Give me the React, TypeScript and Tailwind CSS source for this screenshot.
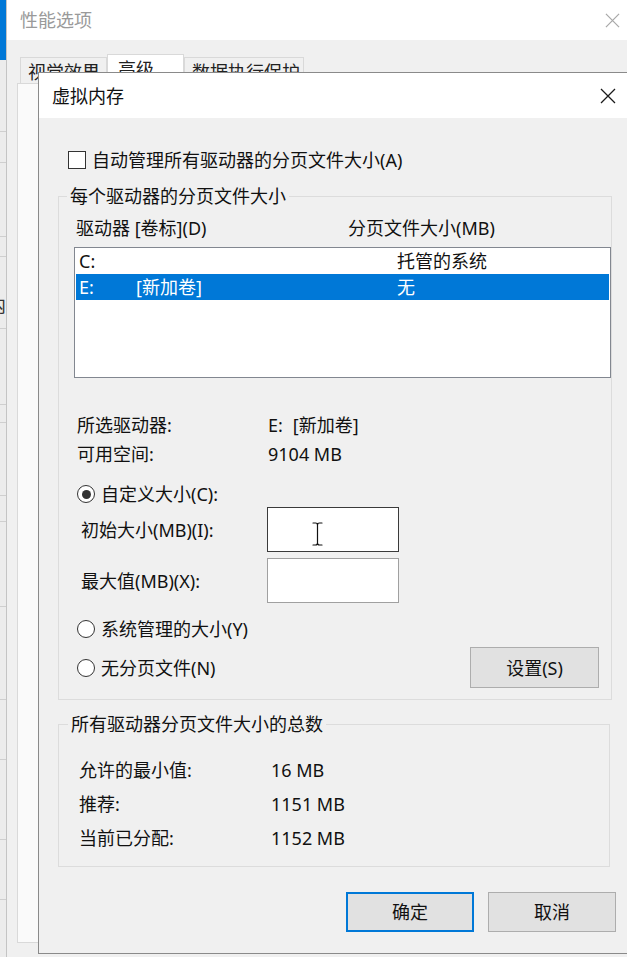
import React from 'react';

const font = "font-['Noto_Sans','Noto_Sans_CJK_SC',sans-serif]";

// y positions of the row lines in the window peeking in on the far left
const stripLines = [132, 163, 237, 257, 329, 405, 423, 496, 522, 607, 700, 760, 840, 900];

function CloseIcon({ className }: { className?: string }) {
  return (
    <svg viewBox="0 0 16 16" className={className} fill="none" stroke="currentColor" strokeWidth={1.3}>
      <path d="M1 1 L15 15 M15 1 L1 15" />
    </svg>
  );
}

function Radio({ checked }: { checked?: boolean }) {
  return (
    <span className="flex h-[18px] w-[18px] shrink-0 items-center justify-center rounded-full border-[1.5px] border-[#333] bg-white">
      {checked && <span className="h-[9px] w-[9px] rounded-full bg-[#333]" />}
    </span>
  );
}

function IBeam() {
  return (
    <svg viewBox="0 0 11 24" className="h-[24px] w-[11px]" fill="none" strokeLinecap="round">
      <path d="M1 1 H3.5 Q5.5 1 5.5 3 V21 Q5.5 23 3.5 23 H1 M10 1 H7.5 Q5.5 1 5.5 3 M5.5 21 Q5.5 23 7.5 23 H10" stroke="#fff" strokeWidth={2.6} />
      <path d="M1 1 H3.5 Q5.5 1 5.5 3 V21 Q5.5 23 3.5 23 H1 M10 1 H7.5 Q5.5 1 5.5 3 M5.5 21 Q5.5 23 7.5 23 H10" stroke="#111" strokeWidth={1.2} />
    </svg>
  );
}

export default function App() {
  let prev = 60;

  return (
    <div className={`relative h-[957px] w-[627px] overflow-hidden bg-[#f0f0f0] text-[18px] text-[#111] ${font}`}>
      {/* window behind, only a sliver visible */}
      <div className="absolute left-0 top-0 h-full w-[7px] overflow-hidden border-r border-[#c4c4c4] bg-[#ececec]">
        <div className="h-[60px] bg-[#0078d7]" />
        {stripLines.map((y, i) => {
          const h = y - prev;
          prev = y;
          return (
            <div key={y} className="flex justify-end overflow-hidden border-b border-[#cfcfcf] leading-[24px]" style={{ height: h }}>
              {i === 4 && <span className="mt-[36px] shrink-0 text-[#333]">内</span>}
            </div>
          );
        })}
      </div>

      {/* 性能选项 */}
      <div className="absolute left-[7px] top-0 h-full w-[640px] bg-[#f0f0f0]">
        <div className="flex h-[40px] items-center justify-between bg-white pl-[13px] pr-[27px] leading-[24px] text-[#9a9a9a]">
          <span>性能选项</span>
          <CloseIcon className="h-[15px] w-[15px] text-[#a8a8a8]" />
        </div>
        <div className="flex h-[43px] items-end pl-[13px] leading-[24px] text-[#222]">
          <div className="h-[26px] w-[87px] border border-b-0 border-[#d9d9d9] bg-[#f0f0f0] pl-[7px] pt-[2px]">视觉效果</div>
          <div className="h-[29px] w-[77px] border border-b-0 border-[#d9d9d9] bg-white pl-[10px] pt-[2px]">高级</div>
          <div className="h-[26px] w-[120px] border border-b-0 border-[#d9d9d9] bg-[#f0f0f0] pl-[7px] pt-[2px]">数据执行保护</div>
        </div>
        <div className="ml-[10px] h-[860px] w-[600px] border border-[#d9d9d9] bg-[#fafafa]" />
      </div>

      {/* 虚拟内存 */}
      <div className="absolute left-[38px] top-[72px] h-[882px] w-[600px] border border-[#8a8a8a] bg-[#f0f0f0] leading-[24px]">
        <div className="flex h-[45px] items-center justify-between bg-white pl-[13px] pr-[21px]">
          <span>虚拟内存</span>
          <CloseIcon className="h-[16px] w-[16px] text-[#1a1a1a]" />
        </div>

        <div className="pl-[19px] pt-[33px]">
          <div className="ml-[10px] flex h-[18px] items-center gap-[6px]">
            <span className="h-[18px] w-[18px] shrink-0 border-[1.5px] border-[#333] bg-white" />
            <span>自动管理所有驱动器的分页文件大小(A)</span>
          </div>

          <fieldset className="mt-[15px] w-[552px] border border-[#dcdcdc] pb-[11px]">
            <legend className="ml-[8px] px-[3px] leading-[24px]">每个驱动器的分页文件大小</legend>

            <div className="mt-[8px] flex pl-[17px]">
              <span className="w-[272px]">驱动器 [卷标](D)</span>
              <span>分页文件大小(MB)</span>
            </div>

            <div className="ml-[15px] mt-[7px] h-[131px] w-[537px] border border-[#828790] bg-white px-px">
              <div className="flex h-[26px] items-center pl-[3px]">
                <span className="w-[57px]">C:</span>
                <span className="w-[261px]" />
                <span>托管的系统</span>
              </div>
              <div className="flex h-[26px] items-center bg-[#0078d7] pl-[3px] text-white">
                <span className="w-[57px]">E:</span>
                <span className="w-[261px]">[新加卷]</span>
                <span>无</span>
              </div>
            </div>

            <div className="mt-[32px] pl-[18px]">
              <div className="flex h-[29px] items-center">
                <span className="w-[191px]">所选驱动器:</span>
                <span>E:</span>
                <span className="ml-[10px]">[新加卷]</span>
              </div>
              <div className="flex h-[29px] items-center">
                <span className="w-[191px]">可用空间:</span>
                <span>9104 MB</span>
              </div>
            </div>

            <div className="ml-[18px] mt-[14px] flex h-[24px] items-center gap-[6px]">
              <Radio checked />
              <span>自定义大小(C):</span>
            </div>

            <div className="mt-[1px] flex h-[45px] items-center pl-[22px]">
              <span className="w-[186px]">初始大小(MB)(I):</span>
              <div className="relative h-[45px] w-[132px] border border-[#3a3a3a] bg-white">
                <span className="absolute left-[44px] top-[14px]">
                  <IBeam />
                </span>
              </div>
            </div>
            <div className="mt-[6px] flex h-[45px] items-center pl-[22px]">
              <span className="w-[186px]">最大值(MB)(X):</span>
              <div className="h-[45px] w-[132px] border border-[#a0a0a0] bg-white" />
            </div>

            <div className="ml-[18px] mt-[14px] flex h-[24px] items-center gap-[6px]">
              <Radio />
              <span>系统管理的大小(Y)</span>
            </div>

            <div className="mt-[6px] flex h-[41px] items-center justify-between pl-[18px] pr-[12px]">
              <div className="flex items-center gap-[6px]">
                <Radio />
                <span>无分页文件(N)</span>
              </div>
              <button className="h-[41px] w-[129px] border border-[#adadad] bg-[#e1e1e1]">设置(S)</button>
            </div>
          </fieldset>

          <fieldset className="mt-[12px] w-[552px] border border-[#dcdcdc] pb-[11px]">
            <legend className="ml-[9px] px-[3px] leading-[24px]">所有驱动器分页文件大小的总数</legend>
            <div className="mt-[17px] pl-[20px]">
              <div className="flex h-[34px] items-center">
                <span className="w-[192px]">允许的最小值:</span>
                <span>16 MB</span>
              </div>
              <div className="flex h-[34px] items-center">
                <span className="w-[192px]">推荐:</span>
                <span>1151 MB</span>
              </div>
              <div className="flex h-[34px] items-center">
                <span className="w-[192px]">当前已分配:</span>
                <span>1152 MB</span>
              </div>
            </div>
          </fieldset>

          <div className="ml-[288px] mt-[25px] flex gap-[14px]">
            <button className="h-[40px] w-[128px] border-2 border-[#0078d7] bg-[#e1e1e1]">确定</button>
            <button className="h-[40px] w-[128px] border border-[#adadad] bg-[#e1e1e1]">取消</button>
          </div>
        </div>
      </div>
    </div>
  );
}
